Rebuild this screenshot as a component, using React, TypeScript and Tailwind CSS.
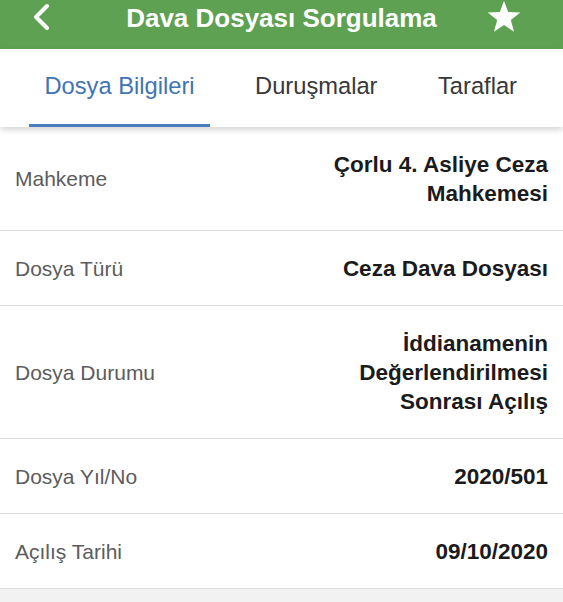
import React from "react";

const rows: { label: string; value: string[] }[] = [
  { label: "Mahkeme", value: ["Çorlu 4. Asliye Ceza", "Mahkemesi"] },
  { label: "Dosya Türü", value: ["Ceza Dava Dosyası"] },
  { label: "Dosya Durumu", value: ["İddianamenin", "Değerlendirilmesi", "Sonrası Açılış"] },
  { label: "Dosya Yıl/No", value: ["2020/501"] },
  { label: "Açılış Tarihi", value: ["09/10/2020"] },
];

const tabs = [
  { name: "Dosya Bilgileri", active: true },
  { name: "Duruşmalar", active: false },
  { name: "Taraflar", active: false },
];

export default function App() {
  return (
    <div
      className="w-full h-[602px] bg-[#f2f2f2] overflow-hidden"
      style={{ fontFamily: '"Liberation Sans", Arial, sans-serif' }}
    >
      <div className="h-[49px] bg-[#5fa153]">
        <div className="h-[34px] grid grid-cols-[1fr_auto_1fr] items-center">
          <div className="pl-[32px] flex items-center">
            <svg width="18" height="28" viewBox="0 0 18 28" fill="none">
              <path d="M15 3 L4 14 L15 25" stroke="white" strokeWidth="4" strokeLinecap="round" strokeLinejoin="round" />
            </svg>
          </div>
          <div className="text-white font-bold text-[26px] leading-none pt-[2px]">Dava Dosyası Sorgulama</div>
          <div className="flex justify-end pr-[41px]">
            <svg width="36" height="34" viewBox="0 0 24 23">
              <path
                d="M12 0.5 L14.85 8.1 L23 8.45 L16.6 13.5 L18.8 21.4 L12 16.9 L5.2 21.4 L7.4 13.5 L1 8.45 L9.15 8.1 Z"
                fill="white"
              />
            </svg>
          </div>
        </div>
      </div>
      <div className="relative z-10 h-[78px] bg-white shadow-[0_3px_6px_rgba(0,0,0,0.16)] flex pl-[29px] gap-[29.5px]">
        {tabs.map((t) => (
          <div key={t.name} className="flex flex-col h-full">
            <div
              className={`flex-1 px-[15.5px] flex items-center text-[23.7px] ${
                t.active ? "text-[#3f74b6]" : "text-[#383838]"
              }`}
            >
              {t.name}
            </div>
            <div className={`h-[3px] ${t.active ? "bg-[#4a7cc0]" : "bg-transparent"}`} />
          </div>
        ))}
      </div>
      <div className="bg-white">
        {rows.map((r) => (
          <div
            key={r.label}
            className="flex items-center justify-between px-[15px] py-[22.5px] border-b border-[#dadada]"
          >
            <div className="text-[21px] text-[#5c5c5c] leading-[29px]">{r.label}</div>
            <div className="max-w-[235px] text-right font-bold text-[22.5px] leading-[29px] text-[#1b1b1b]">
              {r.value.map((v) => (
                <div key={v}>{v}</div>
              ))}
            </div>
          </div>
        ))}
      </div>
    </div>
  );
}
